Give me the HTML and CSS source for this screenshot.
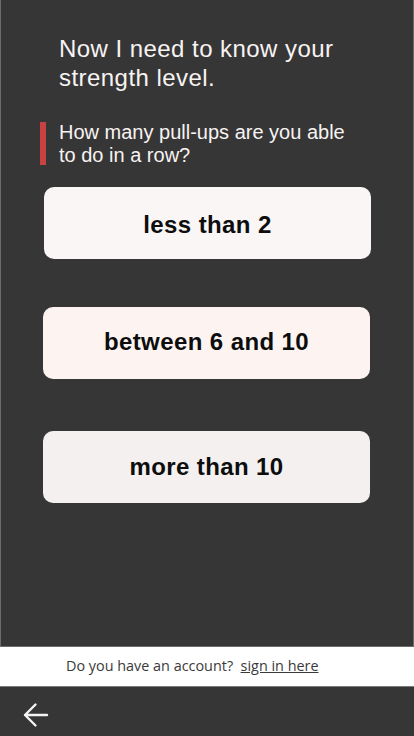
FILE: index.html
```html
<!DOCTYPE html>
<html lang="en">
<head>
<meta charset="utf-8">
<title>Strength level</title>
<link rel="stylesheet" href="styles.css">
</head>
<body>
<div class="screen">
  <main class="main">
    <h1 class="title">Now I need to know your strength level.</h1>
    <div class="question">
      <span class="qbar"></span>
      <p class="qtext">How many pull-ups are you able to do in a row?</p>
    </div>
    <div class="options">
      <button class="option option-a">less than 2</button>
      <button class="option option-b">between 6 and 10</button>
      <button class="option option-c">more than 10</button>
    </div>
  </main>
  <div class="account">
    <span>Do you have an account?&nbsp;&nbsp;<a class="signin" href="#">sign in here</a></span>
  </div>
  <nav class="navbar">
    <svg class="back" width="26" height="26" viewBox="0 0 26 26" aria-label="back">
      <path d="M2 13 H24 M12.5 2.5 L2 13 L12.5 23.5" fill="none" stroke="#f4f4f4" stroke-width="2.4" stroke-linecap="round" stroke-linejoin="round"/>
    </svg>
  </nav>
</div>
</body>
</html>
```

FILE: styles.css
```css
* { box-sizing: border-box; }
html, body { margin: 0; padding: 0; }
body {
  background: #363636;
  font-family: "Liberation Sans", Arial, sans-serif;
}
.screen {
  width: 414px;
  height: 736px;
  display: flex;
  flex-direction: column;
}
.main {
  flex: 1;
  background: #363636;
  border: 1px solid #6c6c6c;
  border-top: none;
  padding: 34px 43px 0 39px;
}
.title {
  margin: 0;
  padding-left: 19px;
  padding-right: 10px;
  font-size: 24px;
  line-height: 29px;
  font-weight: normal;
  letter-spacing: 0.45px;
  color: #f8f3f3;
}
.question {
  display: flex;
  gap: 13px;
  margin-top: 29px;
}
.qbar {
  flex: 0 0 6px;
  height: 43px;
  margin-top: 1px;
  background: #c94242;
}
.qtext {
  margin: 0;
  width: 296px;
  font-size: 20px;
  line-height: 23px;
  color: #f8f3f3;
}
.options {
  display: flex;
  flex-direction: column;
  margin-top: 20px;
}
.option {
  width: 327px;
  height: 72px;
  border: none;
  border-radius: 10px;
  font-family: "Liberation Sans", Arial, sans-serif;
  font-size: 24px;
  font-weight: bold;
  letter-spacing: 0.4px;
  color: #0d0d0d;
  padding: 0;
  display: flex;
  align-items: center;
  justify-content: center;
}
.option-a { background: #f9f6f5; margin-left: 4px; padding-top: 3px; }
.option-b { background: #fdf4f2; margin-left: 3px; margin-top: 48px; padding-bottom: 2px; }
.option-c { background: #f3f0ef; margin-left: 3px; margin-top: 52px; }
.account {
  height: 39px;
  background: #ffffff;
  display: flex;
  align-items: center;
  padding-left: 66px;
  padding-bottom: 3px;
  font-family: "Open Sans", "Noto Sans", sans-serif;
  font-size: 14.4px;
  color: #3a3a3a;
}
.signin {
  color: #3a3a3a;
  text-decoration: underline;
}
.navbar {
  flex: 0 0 50px;
  background: #363636;
  border-top: 1px solid #7a7a7a;
  display: flex;
  align-items: center;
  padding-left: 23px;
}
.back { display: block; margin-top: 6px; }
```
